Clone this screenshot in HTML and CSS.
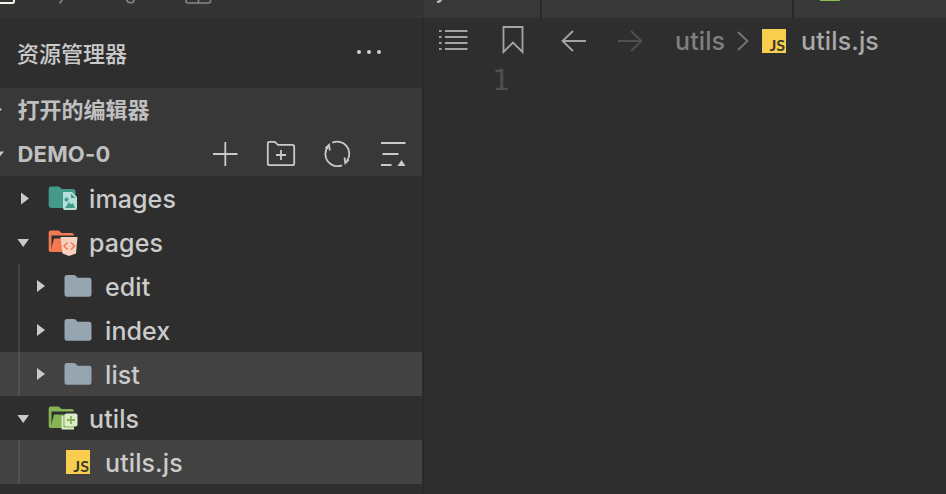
FILE: index.html
```
<!DOCTYPE html>
<html lang="zh-CN">
<head>
    <meta charset="UTF-8">
    <meta name="viewport" content="width=device-width, initial-scale=1.0">
    <title>utils.js</title>
    <link rel="stylesheet" href="styles.css">
</head>
<body>
    <div class="sidebar">
        <div class="toolbar">
            <svg width="422" height="18" viewBox="0 0 422 18" fill="none" stroke="#858585" stroke-width="1.6">
                <path d="M-2 3H12.5Q14 3 14 1V-2" stroke="#f4f4ec" stroke-width="2"/>
                <path d="M59.5 3.5L63 -1"/>
                <path d="M126.500 -1Q127 2.800 130.500 2.800Q134 2.800 134.500 -1"/>
                <path d="M186 -2V1Q186 3 188 3H208.500Q210.500 3 210.500 1V-2M198.500 -2V3"/>
            </svg>
        </div>
        <div class="title">
            <span>资源管理器</span>
            <svg class="more" width="28" height="6" viewBox="0 0 28 6" fill="#cfcfcf">
                <circle cx="4" cy="3" r="2"/><circle cx="14" cy="3" r="2"/><circle cx="24" cy="3" r="2"/>
            </svg>
        </div>
        <div class="section">
            <svg class="fold" width="6" height="12" viewBox="0 0 6 12"><path d="M-4 1L2 5.500L-4 10Z" fill="#c5c5c5"/></svg>
            <span class="section-cn">打开的编辑器</span>
        </div>
        <div class="section">
            <svg class="fold" width="6" height="12" viewBox="0 0 6 12"><path d="M-7 3.500H4L-1.500 10.500Z" fill="#c5c5c5"/></svg>
            <span class="section-name">DEMO-0</span>
            <div class="actions">
                <svg width="30" height="30" viewBox="0 0 30 30"><path d="M3 15H27.500M15.300 3V27"/></svg>
                <svg width="30" height="30" viewBox="0 0 30 30">
                    <path d="M1.800 25V4.500Q1.800 2.800 3.500 2.800H8.800L12 5.800H26.500Q28.200 5.800 28.200 7.500V24.500Q28.200 26.200 26.500 26.200H3.500Q1.800 26.200 1.800 24.500ZM10 16H20M15 11V21"/>
                </svg>
                <svg width="30" height="30" viewBox="0 0 30 30">
                    <path d="M10.200 3.700A12.100 12.100 0 0 1 25.200 21.500M20 26.300A12.100 12.100 0 0 1 5.800 7.800"/>
                    <path d="M3.500 9.500L7 6L7.800 11.500M22.500 18.500L23.300 24L26.800 20.500"/>
                </svg>
                <svg width="30" height="30" viewBox="0 0 30 30">
                    <path d="M3 4H27.500M4.500 15H20.500M3 26H13.500"/><path d="M19.500 27L23.500 21L27.500 27Z" fill="#cacaca" stroke="none"/>
                </svg>
            </div>
        </div>

        <div class="row">
            <svg class="arrow" width="12" height="14" viewBox="0 0 12 14"><path d="M2 1.500L10 7.500L2 13.500Z"/></svg>
            <svg class="icon" width="30" height="28" viewBox="0 0 30 28">
                <path d="M.7 5Q.7 2.500 3.200 2.500H11L14 5H25Q27.500 5 27.500 7.500V24H3.700Q.7 24 .7 21Z" fill="#43998a"/>
                <path d="M16 8H24L29 13V24Q29 26 27 26H17Q15 26 15 24V9Q15 8 16 8Z" fill="#b5dfd8"/>
                <path d="M23 9.500V14H27.500ZM17 24L21 18L23 20.500L25 19L27 24Z" fill="#43998a"/>
                <circle cx="18.500" cy="15.500" r="2" fill="#43998a"/>
            </svg>
            <span class="name">images</span>
        </div>
        <div class="row">
            <svg class="arrow down" width="12" height="14" viewBox="0 0 12 14"><path d="M-1.500 4H10L4.200 12Z"/></svg>
            <svg class="icon" width="30" height="28" viewBox="0 0 30 28">
                <path d="M.7 4.500Q.7 2.500 2.700 2.500H10.500L13.500 5H24Q26 5 26 7.500H3.500V24Q.7 24 .7 22Z" fill="#f27a50"/>
                <path d="M6 10.500H26V24H2.500Z" fill="#f27a50"/>
                <path d="M12.500 9H29.500L28 25.500L21 28L14.500 25.500Z" fill="#f9cfc0"/>
                <path d="M19.500 14.500L16 18L19.500 21.500M23 14.500L26.500 18L23 21.500" fill="none" stroke="#f27a50" stroke-width="1.500"/>
            </svg>
            <span class="name">pages</span>
        </div>
        <div class="children">
            <div class="row">
                <svg class="arrow" width="12" height="14" viewBox="0 0 12 14"><path d="M2 1L10 7L2 13Z"/></svg>
                <svg class="icon" width="30" height="28" viewBox="0 0 30 28"><path d="M.5 5.500Q.5 3 3 3H10Q12 3 13.500 5.800H25Q27.500 5.800 27.500 8.500V22Q27.500 24.800 25 24.800H3Q.5 24.800 .5 22Z" fill="#95a5b1"/></svg>
                <span class="name">edit</span>
            </div>
            <div class="row">
                <svg class="arrow" width="12" height="14" viewBox="0 0 12 14"><path d="M2 1L10 7L2 13Z"/></svg>
                <svg class="icon" width="30" height="28" viewBox="0 0 30 28"><path d="M.5 5.500Q.5 3 3 3H10Q12 3 13.500 5.800H25Q27.500 5.800 27.500 8.500V22Q27.500 24.800 25 24.800H3Q.5 24.800 .5 22Z" fill="#95a5b1"/></svg>
                <span class="name">index</span>
            </div>
            <div class="row active">
                <svg class="arrow" width="12" height="14" viewBox="0 0 12 14"><path d="M2 1L10 7L2 13Z"/></svg>
                <svg class="icon" width="30" height="28" viewBox="0 0 30 28"><path d="M.5 5.500Q.5 3 3 3H10Q12 3 13.500 5.800H25Q27.500 5.800 27.500 8.500V22Q27.500 24.800 25 24.800H3Q.5 24.800 .5 22Z" fill="#95a5b1"/></svg>
                <span class="name">list</span>
            </div>
        </div>
        <div class="row">
            <svg class="arrow down" width="12" height="14" viewBox="0 0 12 14"><path d="M-1.500 4H10L4.200 12Z"/></svg>
            <svg class="icon" width="30" height="28" viewBox="0 0 30 28">
                <path d="M.7 4.500Q.7 2.500 2.700 2.500H10.500L13.500 5H24Q26 5 26 7.500H3.500V24Q.7 24 .7 22Z" fill="#86b455"/>
                <path d="M6 10.500H26V24H2.500Z" fill="#86b455"/>
                <path d="M14.500 12V24.500H26" fill="none" stroke="#dcebcb" stroke-width="1.8"/>
                <rect x="16.500" y="9.500" width="13" height="13" rx="2" fill="#dcebcb"/>
                <path d="M23 12V20M19 16H27" stroke="#86b455" stroke-width="1.8"/>
            </svg>
            <span class="name">utils</span>
        </div>
        <div class="children">
            <div class="row active file">
                <span class="js"><b>JS</b></span>
                <span class="name">utils.js</span>
            </div>
        </div>
    </div>

    <div class="editor">
        <div class="tabs">
            <div class="tab first"><svg width="40" height="18" viewBox="0 0 40 18"><path d="M13 1.800Q17 2 17.300 -2" fill="none" stroke="#bdbdbd" stroke-width="2.200"/></svg></div>
            <div class="tab second"></div>
            <div class="tab last"><svg width="60" height="18" viewBox="0 0 60 18"><path d="M26 -1H46V0Q46 1 45 1H27Q26 1 26 0Z" fill="#8bc34a"/></svg></div>
        </div>
        <div class="breadcrumb">
            <svg class="list-icon" width="30" height="24" viewBox="0 0 30 24">
                <path d="M7 3H29.500M7 9H29.500M7 15H29.500M7 21H29.500"/><path d="M1 3H3.500M1 9H3.500M1 15H3.500M1 21H3.500"/>
            </svg>
            <svg class="mark-icon" width="22" height="30" viewBox="0 0 22 30"><path d="M1.500 2H20.500V27L11 17.500L1.500 27Z"/></svg>
            <svg class="nav-icon" width="26" height="24" viewBox="0 0 26 24"><path d="M25 12H1.500M12 2L1.500 12L12 22"/></svg>
            <svg class="nav-icon disabled" width="26" height="24" viewBox="0 0 26 24"><path d="M1 12H24.500M14 2L24.500 12L14 22"/></svg>
            <span class="crumb">utils</span>
            <svg class="sep" width="12" height="22" viewBox="0 0 12 22"><path d="M1 2L10.500 11L1 20"/></svg>
            <span class="js"><b>JS</b></span>
            <span class="crumb current">utils.js</span>
        </div>
        <div class="code"><span class="line-number">1</span></div>
    </div>
</body>
</html>
```
FILE: styles.css
```
* {
    margin: 0;
    padding: 0;
    box-sizing: border-box;
}

body {
    display: flex;
    height: 100vh;
    overflow: hidden;
    background: #2e2e2e;
    color: #cbcbcb;
    font-family: Inter, "Noto Sans CJK SC", sans-serif;
}

svg {
    display: block;
    flex: none;
}

.sidebar {
    width: 424px;
    flex: none;
    border-right: 2px solid #292929;
}

.toolbar {
    height: 18px;
    width: 424px;
    background: #343434;
}

.title {
    display: flex;
    align-items: center;
    justify-content: space-between;
    height: 70px;
    padding: 0 39px 2px 17px;
    font-size: 22px;
    font-weight: 500;
}

.section {
    display: flex;
    align-items: center;
    height: 44px;
    background: #383838;
    color: #c0c0c0;
    font-weight: 700;
}

.fold {
    margin-right: 11.5px;
}

.section-cn {
    padding-bottom: 4px;
    font-size: 22px;
}

.section-name {
    font-size: 22px;
    letter-spacing: 0.2px;
}

.actions {
    display: flex;
    gap: 26px;
    margin-left: auto;
    padding-right: 14px;
}

.actions svg {
    fill: none;
    stroke: #cacaca;
    stroke-width: 1.8;
}

.row {
    display: flex;
    align-items: center;
    height: 44px;
    padding-left: 19px;
}

.arrow {
    fill: #cbcbcb;
    margin-right: 17px;
}

.down {
    overflow: visible;
}

.icon {
    margin-right: 11px;
}

.name {
    font-size: 25px;
    font-weight: 450;
    line-height: 44px;
    letter-spacing: 0.1px;
    padding-top: 2px;
}

.children {
    background: linear-gradient(#454545, #454545) 18px 0 / 2px 100% no-repeat;
}

.children .row {
    padding-left: 35px;
}

.active {
    background: linear-gradient(#505050, #505050) 18px 0 / 2px 100% no-repeat #424242;
}

.children .file {
    padding-left: 66px;
}

.js {
    display: flex;
    align-items: flex-end;
    justify-content: flex-end;
    width: 24px;
    height: 24px;
    padding: 0 1px 1px 0;
    background: #f9ce4e;
    color: #3b392f;
    font: 16px/15px Lato, sans-serif;
}

.file .js {
    margin-right: 15px;
}

.editor {
    flex: 1;
}

.tabs {
    display: flex;
    height: 18px;
    background: #383838;
}

.tab {
    border-right: 2px solid #292929;
}

.first {
    width: 118px;
}

.second {
    width: 252px;
}

.last {
    border: none;
}

.breadcrumb {
    display: flex;
    align-items: center;
    height: 46px;
    padding-left: 14px;
    fill: none;
    stroke: #a5a5a5;
    stroke-width: 1.8;
}

.list-icon {
    margin-right: 34px;
    margin-top: -2px;
}

.mark-icon {
    margin-right: 37px;
    margin-top: -2px;
}

.nav-icon {
    margin-right: 30px;
}

.disabled {
    stroke: #505050;
    margin-right: 32px;
}

.crumb {
    color: #7f7f7f;
    font-size: 25px;
    font-weight: 450;
    letter-spacing: 0.1px;
}

.sep {
    stroke: #777;
    margin: 0 13px 0 12px;
}

.js + .current {
    color: #a9a9a9;
    margin-left: 15px;
}

.code {
    margin-top: -1px;
    padding-left: 68px;
    color: #505050;
    font: 29px/34px "DejaVu Sans Mono", monospace;
}
```
